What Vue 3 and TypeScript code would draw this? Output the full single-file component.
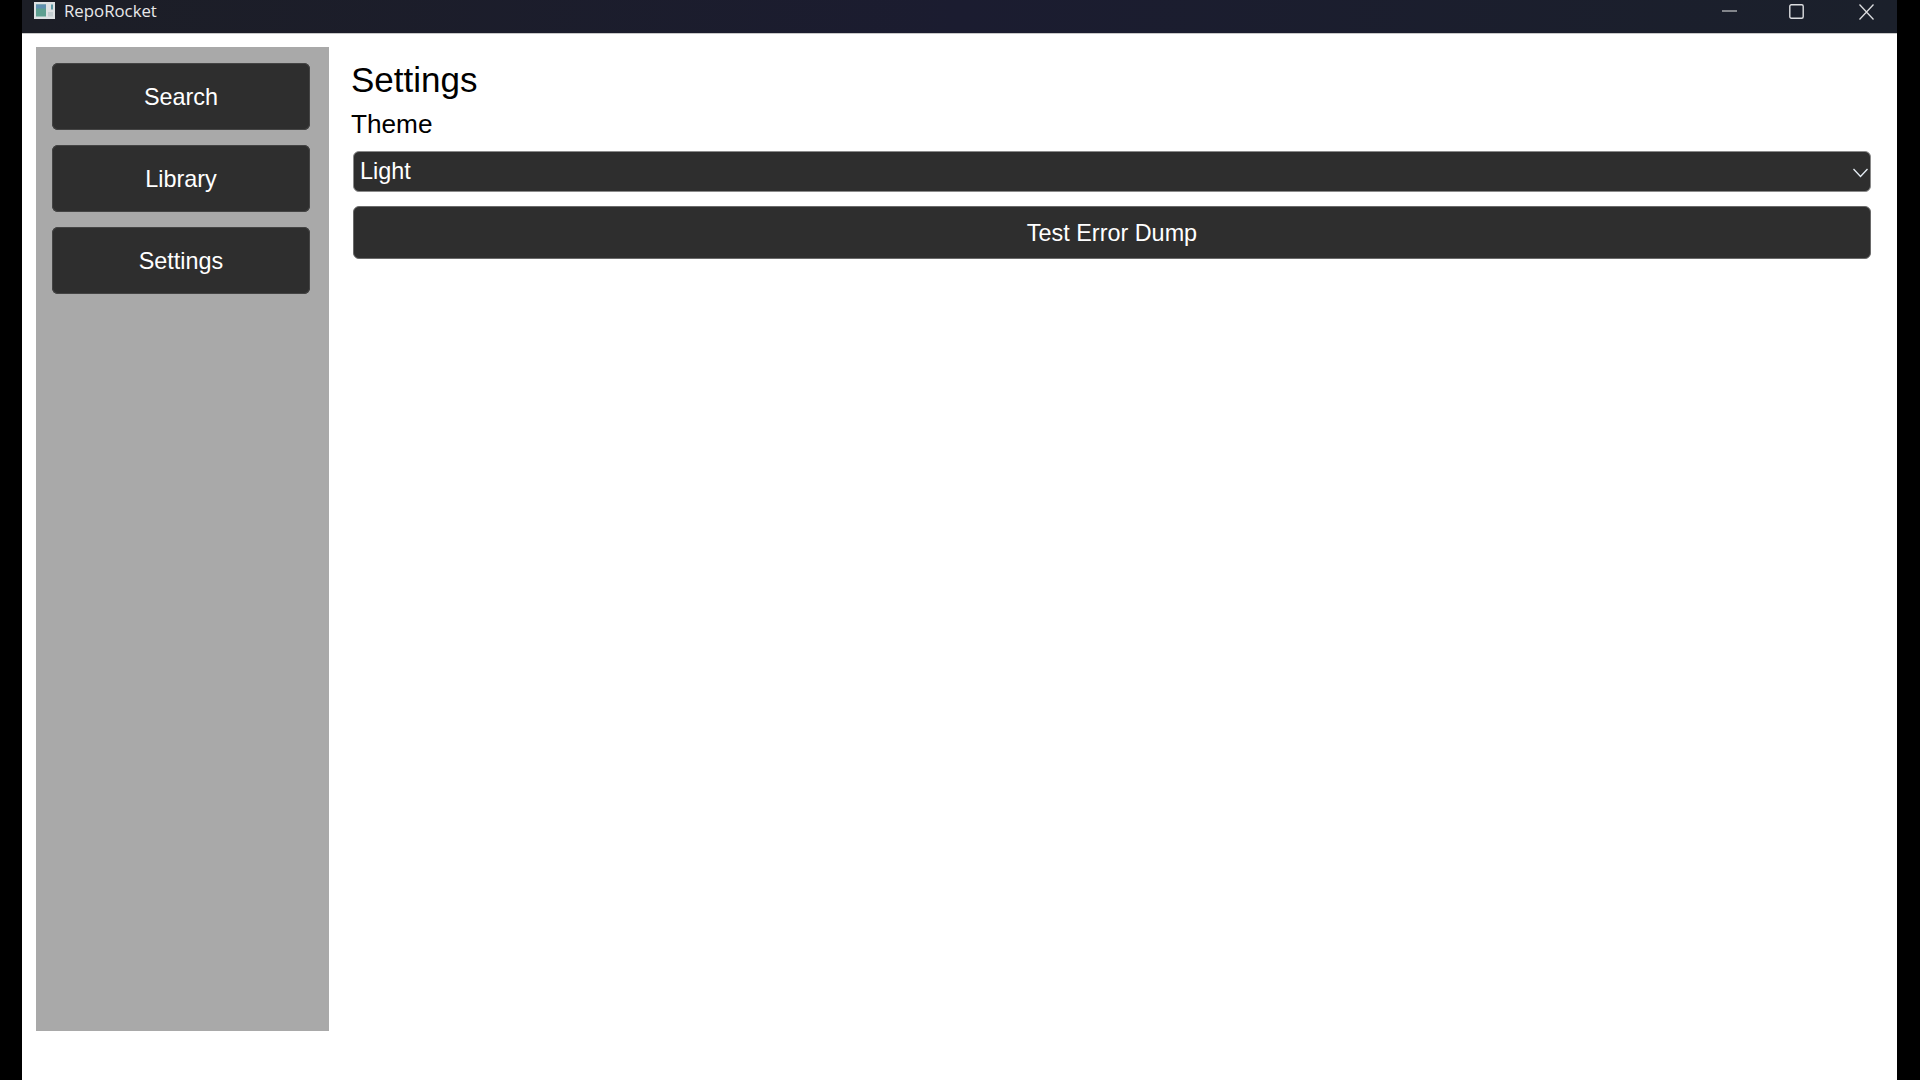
<script setup lang="ts">
const navItems: string[] = ['Search', 'Library', 'Settings']
</script>

<template>
  <div class="screen">
    <div class="window">
      <header class="titlebar">
        <div class="brand">
          <svg class="app-icon" width="21" height="17" viewBox="0 0 21 17" aria-hidden="true">
            <rect width="21" height="17" fill="#dde1e3" />
            <rect x="2" y="2.5" width="10" height="12" fill="#5d9f90" />
            <rect x="2" y="2.5" width="10" height="4" fill="#5f8fb0" />
            <rect x="17" y="2.5" width="2" height="5" fill="#5f9aa5" />
            <rect x="14" y="10" width="5" height="4.5" fill="#c4ced1" />
          </svg>
          <span class="app-name">RepoRocket</span>
        </div>
        <div class="controls">
          <svg width="15" height="16" viewBox="0 0 15 16" aria-hidden="true">
            <path d="M0 8H15" stroke="#c9cacc" stroke-width="1.2" fill="none" />
          </svg>
          <svg class="max" width="15" height="15" viewBox="0 0 15 15" aria-hidden="true">
            <rect x="0.8" y="0.8" width="13.4" height="13.4" rx="1.5" stroke="#dcdde0" stroke-width="1.4" fill="none" />
          </svg>
          <svg class="close" width="15" height="16" viewBox="0 0 15 16" aria-hidden="true">
            <path d="M0.5 0.5L14.5 15.5M14.5 0.5L0.5 15.5" stroke="#dcdde0" stroke-width="1.3" fill="none" />
          </svg>
        </div>
      </header>

      <div class="body">
        <aside class="sidebar">
          <button v-for="item in navItems" :key="item" class="nav-btn" type="button">{{ item }}</button>
        </aside>

        <main class="content">
          <h1 class="title">Settings</h1>
          <label class="label" for="theme">Theme</label>
          <div class="select-wrap">
            <select id="theme" class="select">
              <option>Light</option>
              <option>Dark</option>
            </select>
            <svg class="chevron" width="15" height="10" viewBox="0 0 15 10" aria-hidden="true">
              <path d="M0.5 1L7.5 8.5L14.5 1" stroke="#e6eef5" stroke-width="1.3" fill="none" />
            </svg>
          </div>
          <button class="wide-btn" type="button">Test Error Dump</button>
        </main>
      </div>
    </div>
  </div>
</template>

<style>
html, body {
  margin: 0;
  background: #000;
}
</style>

<style scoped>
.screen {
  width: 1920px;
  height: 1080px;
  background: #000;
  padding: 0 23px 0 22px;
  box-sizing: border-box;
  overflow: hidden;
}
.window {
  height: 100%;
  display: flex;
  flex-direction: column;
  background: #fff;
}
.titlebar {
  height: 34px;
  flex: none;
  box-sizing: border-box;
  background: linear-gradient(90deg, #1c1e26 0%, #1b1c30 50%, #1b202b 100%);
  border-bottom: 1px solid #c8c8c8;
  display: flex;
  align-items: flex-start;
  justify-content: space-between;
  padding: 0 23px 0 12px;
}
.brand {
  display: flex;
  align-items: center;
  gap: 9px;
  height: 22px;
}
.app-icon {
  display: block;
  margin-top: -1px;
}
.app-name {
  font-family: "Open Sans", "Noto Sans", sans-serif;
  font-size: 16.8px;
  color: #e8e8ea;
  line-height: 22px;
}
.controls {
  display: flex;
  align-items: flex-start;
  padding-top: 3px;
}
.controls svg {
  display: block;
}
.max {
  margin: 1px 0 0 52px;
}
.close {
  margin: 1px 0 0 55px;
}
.body {
  flex: 1;
  display: flex;
  align-items: flex-start;
  padding: 13px 0 0 14px;
  font-family: "Liberation Sans", Arial, sans-serif;
}
.sidebar {
  width: 293px;
  height: 984px;
  flex: none;
  box-sizing: border-box;
  background: #a9a9a9;
  padding: 16px 19px 0 16px;
  display: flex;
  flex-direction: column;
  gap: 15px;
}
.nav-btn {
  height: 67px;
  flex: none;
  border: 0;
  border-radius: 6px;
  background: #2e2e2e;
  box-shadow: inset 0 0 0 1px #444;
  color: #fff;
  font: inherit;
  font-size: 23.4px;
  padding: 2px 0 0;
}
.content {
  flex: 1;
  min-width: 0;
  padding: 13px 26px 0 22px;
  display: flex;
  flex-direction: column;
}
.title {
  margin: 0;
  font-size: 35px;
  font-weight: 400;
  line-height: 40px;
  color: #000;
}
.label {
  font-size: 26.2px;
  line-height: 30px;
  margin-top: 9px;
  color: #000;
}
.select-wrap {
  position: relative;
  margin: 12px 0 0 2px;
  height: 41px;
}
.select {
  appearance: none;
  -webkit-appearance: none;
  display: block;
  width: 100%;
  height: 100%;
  box-sizing: border-box;
  border: 1px solid #8a8a8a;
  border-radius: 6px;
  background: #2e2e2e;
  color: #fff;
  font: inherit;
  font-size: 23.4px;
  padding: 0 0 2px 6px;
  outline: none;
}
.chevron {
  position: absolute;
  right: 3px;
  top: 17px;
  pointer-events: none;
}
.wide-btn {
  margin: 14px 0 0 2px;
  height: 53px;
  flex: none;
  border: 1px solid #6a6a6a;
  border-radius: 6px;
  background: #2e2e2e;
  color: #fff;
  font: inherit;
  font-size: 23.4px;
  padding: 2px 0 0;
}
</style>
